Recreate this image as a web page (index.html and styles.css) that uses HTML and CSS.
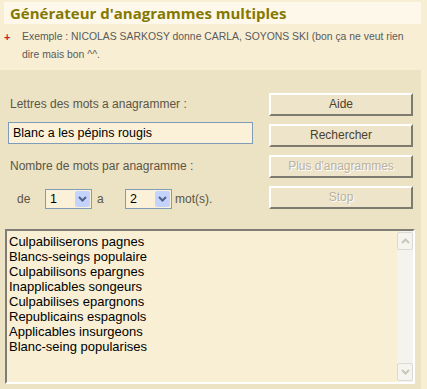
FILE: index.html
```html
<!DOCTYPE html>
<html lang="fr">
<head>
  <meta charset="UTF-8">
  <title>Générateur d'anagrammes multiples</title>
  <link rel="stylesheet" href="styles.css">
</head>
<body>

  <!-- Title -->
  <div class="title-bar">Générateur d'anagrammes multiples</div>

  <!-- Example -->
  <div class="example">
    <span class="bullet">+</span>
    <p>Exemple : NICOLAS SARKOSY donne CARLA, SOYONS SKI (bon ça ne veut rien dire mais bon ^^.</p>
  </div>

  <!-- Form panel -->
  <div class="panel">
    <div class="form-row">
      <div class="fields">
        <div class="label">Lettres des mots a anagrammer :</div>
        <div class="text-input">Blanc a les pépins rougis</div>
        <div class="label">Nombre de mots par anagramme :</div>
        <div class="count-row">
          <span class="count-de">de</span>
          <div class="select"><span>1</span><span class="select-btn"><svg width="9" height="6" viewBox="0 0 9 6"><path d="M1 1l3.5 3.5L8 1" fill="none" stroke="#4d6185" stroke-width="2"/></svg></span></div>
          <span class="count-a">a</span>
          <div class="select"><span>2</span><span class="select-btn"><svg width="9" height="6" viewBox="0 0 9 6"><path d="M1 1l3.5 3.5L8 1" fill="none" stroke="#4d6185" stroke-width="2"/></svg></span></div>
          <span class="count-mots">mot(s).</span>
        </div>
      </div>
      <div class="buttons">
        <div class="btn">Aide</div>
        <div class="btn">Rechercher</div>
        <div class="btn disabled">Plus d'anagrammes</div>
        <div class="btn disabled">Stop</div>
      </div>
    </div>

    <!-- Results -->
    <div class="results">
      <div class="results-list">
        <div>Culpabiliserons pagnes</div>
        <div>Blancs-seings populaire</div>
        <div>Culpabilisons epargnes</div>
        <div>Inapplicables songeurs</div>
        <div>Culpabilises epargnons</div>
        <div>Republicains espagnols</div>
        <div>Applicables insurgeons</div>
        <div>Blanc-seing popularises</div>
      </div>
      <div class="scrollbar">
        <div class="scroll-btn"><svg width="9" height="6" viewBox="0 0 9 6"><path d="M1 5l3.5-3.5L8 5" fill="none" stroke="#c9c6bc" stroke-width="2"/></svg></div>
        <div class="scroll-track"></div>
        <div class="scroll-btn"><svg width="9" height="6" viewBox="0 0 9 6"><path d="M1 1l3.5 3.5L8 1" fill="none" stroke="#c9c6bc" stroke-width="2"/></svg></div>
      </div>
    </div>
  </div>

</body>
</html>
```

FILE: styles.css
```css
/* General styling */
body {
  margin: 0;
  width: 427px;
  height: 389px;
  overflow: hidden;
  background-color: #f8eed4;
  font-family: "Liberation Sans", Arial, sans-serif;
  font-size: 12px;
  color: #5b5645;
}

/* Title */
.title-bar {
  margin: 2px 6px 0 4px;
  height: 22px;
  line-height: 22px;
  padding-left: 6px;
  background-color: #fdf8ea;
  color: #857800;
  font-family: "Open Sans", Verdana, sans-serif;
  font-weight: bold;
  font-size: 15px;
}

/* Example line */
.example {
  display: flex;
  padding: 4px 4px 0 4px;
  height: 42px;
}

.bullet {
  width: 18px;
  color: #c0282d;
  font-weight: bold;
  font-size: 11px;
  line-height: 18px;
}

.example p {
  margin: 0;
  width: 392px;
  font-size: 10.4px;
  line-height: 18px;
  color: #5a5a5a;
}

/* Panel */
.panel {
  width: 421px;
  height: 319px;
  background-color: #ece2c4;
}

.form-row {
  display: flex;
  padding: 23px 0 0 8px;
}

.fields {
  width: 245px;
  margin-right: 16px;
}

.label {
  padding-left: 2px;
  line-height: 16px;
  margin-top: 3px;
}

.text-input {
  height: 20px;
  margin: 10px 0 14px;
  border: 1px solid #7f9db9;
  background-color: #fbf1d8;
  color: #000;
  font-size: 12.5px;
  line-height: 20px;
  padding-left: 4px;
}

.count-row {
  display: flex;
  align-items: center;
  margin-top: 15px;
}

.count-de {
  margin-left: 9px;
  width: 28px;
}

.count-a {
  width: 28px;
  padding-left: 5px;
}

.count-mots {
  margin-left: 3px;
}

/* Select box */
.select {
  display: flex;
  width: 45px;
  height: 18px;
  border: 1px solid #7f9db9;
  background-color: #fbf1d8;
  color: #000;
  font-size: 12.5px;
  line-height: 18px;
}

.select span:first-child {
  flex: 1;
  padding-left: 4px;
}

.select-btn {
  width: 15px;
  margin: 1px;
  display: flex;
  align-items: center;
  justify-content: center;
  background-color: #c3d3fb;
  border-radius: 2px;
}

/* Buttons */
.buttons {
  display: flex;
  flex-direction: column;
  gap: 8px;
}

.btn {
  width: 140px;
  height: 19px;
  line-height: 19px;
  text-align: center;
  background-color: #ede4c9;
  border: 2px solid;
  border-color: #fff #7d7a70 #7d7a70 #fff;
  color: #4a4230;
}

.btn.disabled {
  color: #b9b2a0;
  text-shadow: 1px 1px 0 #fff;
}

/* Results textarea */
.results {
  display: flex;
  margin: 20px 0 0 5px;
  width: 406px;
  height: 151px;
  border: 2px solid;
  border-color: #7f7d74 #fff #fff #7f7d74;
  background-color: #f8efd5;
}

.results-list {
  flex: 1;
  padding: 3px 0 0 2px;
  color: #000;
  font-size: 13px;
  line-height: 15px;
}

.scrollbar {
  width: 16px;
  display: flex;
  flex-direction: column;
  background-color: #f4f3ee;
  padding: 1px 0;
}

.scroll-btn {
  height: 16px;
  display: flex;
  align-items: center;
  justify-content: center;
  background-color: #f5f4ef;
  border: 1px solid #dcdad2;
  border-radius: 2px;
}

.scroll-track {
  flex: 1;
}
```
